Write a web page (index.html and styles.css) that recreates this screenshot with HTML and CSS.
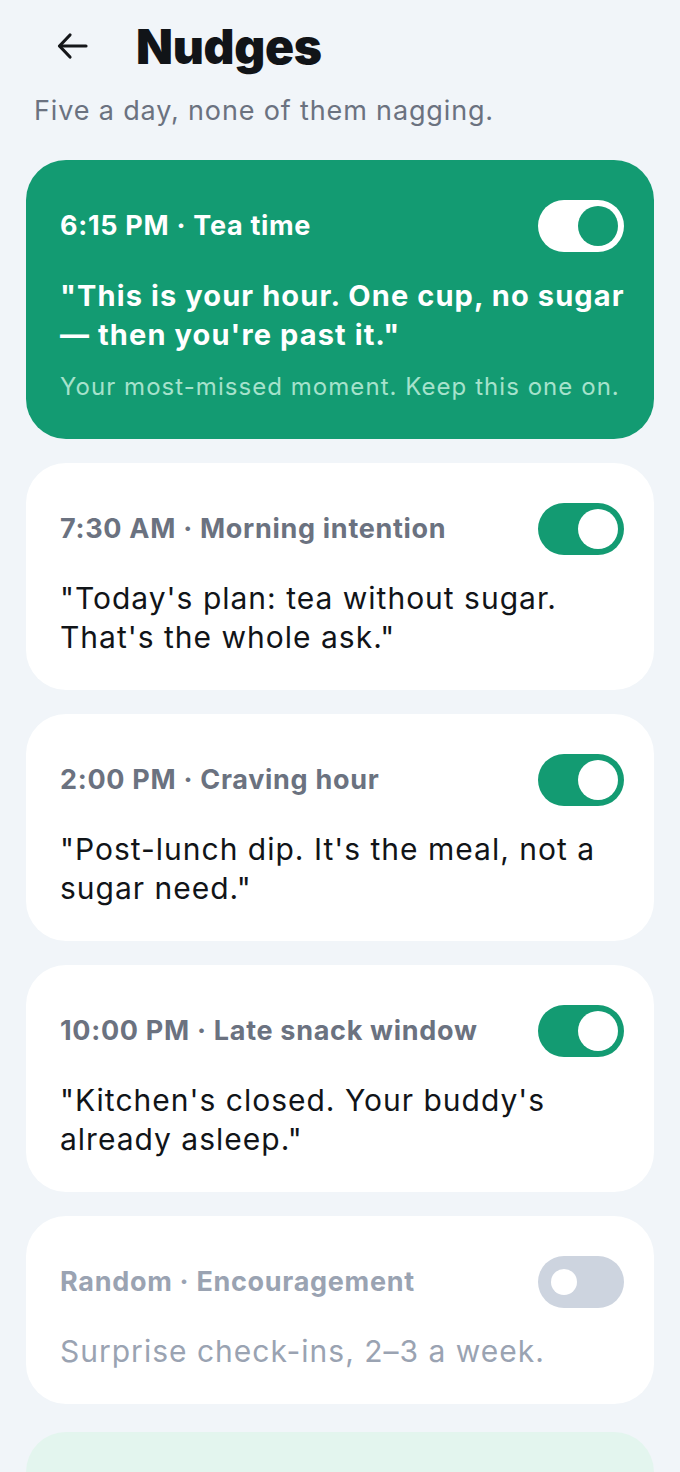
FILE: index.html
```html
<!DOCTYPE html>
<html lang="en">
<head>
    <meta charset="UTF-8">
    <meta name="viewport" content="width=device-width, initial-scale=1.0">
    <title>Nudges</title>
    <link rel="stylesheet" href="styles.css">
</head>
<body>
    <header class="top-bar">
        <button class="back" aria-label="Back">
            <svg width="32" height="28" viewBox="0 0 32 28" fill="none" stroke="#15171a" stroke-width="3.2" stroke-linecap="round" stroke-linejoin="round">
                <path d="M29 14H3"/>
                <path d="M13 3L2.5 14L13 25"/>
            </svg>
        </button>
        <h1>Nudges</h1>
    </header>
    <p class="subtitle">Five a day, none of them nagging.</p>

    <div class="nudge-list">
        <div class="nudge featured">
            <div class="nudge-head">
                <span class="nudge-label">6:15 PM · Tea time</span>
                <span class="toggle on"></span>
            </div>
            <p class="nudge-text">"This is your hour. One cup, no sugar — then you're past it."</p>
            <p class="nudge-note">Your most-missed moment. Keep this one on.</p>
        </div>

        <div class="nudge">
            <div class="nudge-head">
                <span class="nudge-label">7:30 AM · Morning intention</span>
                <span class="toggle on"></span>
            </div>
            <p class="nudge-text">"Today's plan: tea without sugar. That's the whole ask."</p>
        </div>

        <div class="nudge">
            <div class="nudge-head">
                <span class="nudge-label">2:00 PM · Craving hour</span>
                <span class="toggle on"></span>
            </div>
            <p class="nudge-text">"Post-lunch dip. It's the meal, not a sugar need."</p>
        </div>

        <div class="nudge">
            <div class="nudge-head">
                <span class="nudge-label">10:00 PM · Late snack window</span>
                <span class="toggle on"></span>
            </div>
            <p class="nudge-text">"Kitchen's closed. Your buddy's already asleep."</p>
        </div>

        <div class="nudge disabled">
            <div class="nudge-head">
                <span class="nudge-label">Random · Encouragement</span>
                <span class="toggle"></span>
            </div>
            <p class="nudge-text">Surprise check-ins, 2–3 a week.</p>
        </div>

        <div class="tip">
            <p>Turn off any one of these and your buddy won't mind.</p>
        </div>
    </div>
</body>
</html>
```

FILE: styles.css
```css
body {
    font-family: 'Inter', sans-serif;
    background-color: #f1f5f9;
    color: #111418;
    margin: 0;
    padding: 0 26px;
}
.top-bar {
    display: flex;
    align-items: center;
    height: 92px;
}
.back {
    background: none;
    border: none;
    padding: 0;
    margin-left: 31px;
    width: 32px;
    height: 28px;
    cursor: pointer;
}
h1 {
    margin: 0 0 0 47px;
    font-size: 48px;
    font-weight: 900;
    letter-spacing: -0.3px;
    color: #111418;
}
.subtitle {
    margin: 0 0 30px 8px;
    font-size: 27px;
    letter-spacing: 0.85px;
    color: #6b7280;
    line-height: 38px;
}
.nudge-list {
    display: flex;
    flex-direction: column;
    gap: 24px;
}
.nudge {
    background-color: #ffffff;
    border-radius: 40px;
    padding: 40px 24px 33px 34px;
}
.nudge-head {
    display: flex;
    align-items: center;
    justify-content: space-between;
    margin-bottom: 24px;
}
.nudge-label {
    font-size: 27px;
    font-weight: 700;
    letter-spacing: 0.7px;
    line-height: 36px;
    color: #6b7280;
}
.nudge-text {
    max-width: 545px;
    margin: 0;
    font-size: 30px;
    letter-spacing: 1px;
    line-height: 39px;
    color: #111418;
}
.toggle {
    position: relative;
    width: 86px;
    height: 52px;
    margin-right: 6px;
    border-radius: 26px;
    background-color: #139b72;
    flex-shrink: 0;
}
.toggle::after {
    content: '';
    position: absolute;
    top: 6px;
    right: 6px;
    width: 40px;
    height: 40px;
    border-radius: 50%;
    background-color: #ffffff;
}
.toggle:not(.on) {
    background-color: #cdd4df;
}
.toggle:not(.on)::after {
    top: 13px;
    left: 13px;
    right: auto;
    width: 26px;
    height: 26px;
}
.featured {
    background-color: #139b72;
    padding-bottom: 37px;
}
.featured .nudge-label {
    color: #ffffff;
}
.featured .nudge-text {
    max-width: none;
    font-size: 29px;
    font-weight: 700;
    letter-spacing: 1.1px;
    color: #ffffff;
}
.featured .toggle {
    background-color: #ffffff;
}
.featured .toggle::after {
    background-color: #139b72;
}
.nudge-note {
    margin: 18px 0 0;
    font-size: 24px;
    letter-spacing: 1.05px;
    line-height: 30px;
    color: #a6e2cc;
}
.disabled .nudge-label,
.disabled .nudge-text {
    color: #9aa3b2;
}
.tip {
    background-color: #e3f5ee;
    border-radius: 40px;
    padding: 34px 34px 28px;
    margin-top: 4px;
}
.tip p {
    margin: 0;
    font-size: 28px;
    letter-spacing: 1px;
    line-height: 39px;
    color: #111418;
}
```
